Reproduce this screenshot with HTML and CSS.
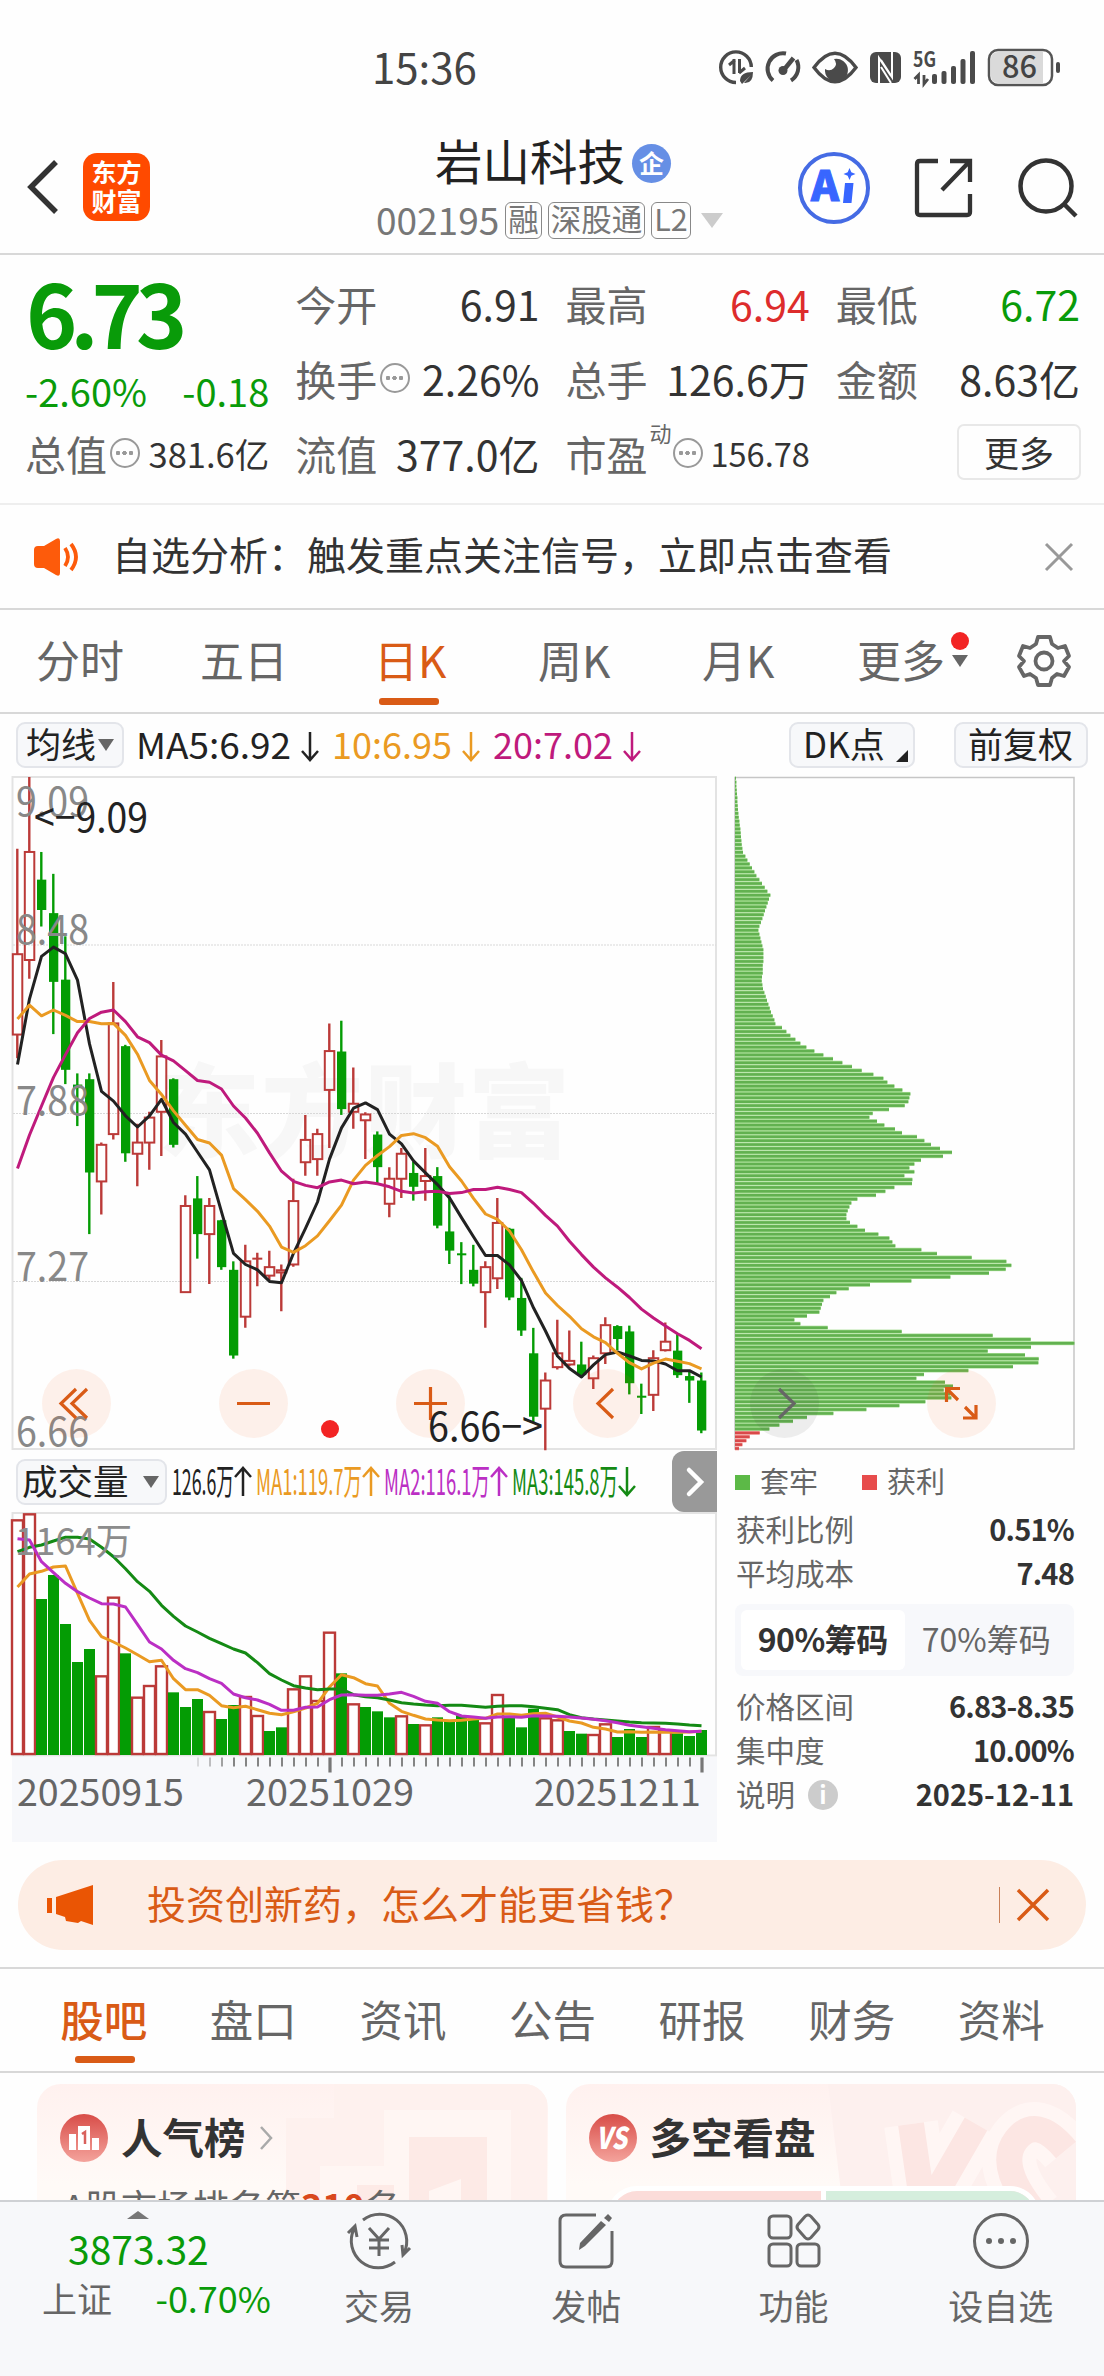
FILE: index.html
```html
<!DOCTYPE html>
<html lang="zh-CN">
<head>
    <meta charset="UTF-8">
    <meta name="viewport" content="width=device-width, initial-scale=1.0">
    <title>岩山科技 002195</title>
    <link rel="stylesheet" href="styles.css">
</head>
<body>

    <!-- 状态栏 -->
    <div class="status">
        <span class="clock">15:36</span>
        <svg class="status-icons" width="346" height="44" viewBox="716 46 346 44">
            <g fill="none" stroke="#4a4a4a" stroke-width="3.400">
                <path d="M736 82.500A15.300 15.300 0 1 1 751.300 67"/>
                <path d="M734 59v15M735 60l-6 5M739.500 59v14M739 73l6-5" stroke-width="3"/>
                <path d="M773 80.500A15.500 15.500 0 0 1 786 53.500M796.500 60A15.500 15.500 0 0 1 791 80.500" stroke-width="4"/>
                <path d="M783 71L793.500 58" stroke-width="4.500"/>
                <path d="M814 67.500Q835 39 856 67.500Q835 96 814 67.500Z"/>
            </g>
            <g fill="#4a4a4a">
                <path d="M740 81q0-9 13-9q0 12-9 11l7-8l-9 9z"/>
                <circle cx="783" cy="70.500" r="4.500"/>
                <path d="M834 59a11.500 11.500 0 1 1-9 10q5 3 9-1t0-9z"/>
                <rect x="870" y="52" width="31" height="31" rx="6"/>
                <text x="913" y="67" font-size="21" font-weight="700" textLength="23" lengthAdjust="spacingAndGlyphs">5G</text>
                <rect x="932" y="74" width="5" height="10" rx="2"/>
                <rect x="941.500" y="71" width="5" height="13" rx="2"/>
                <rect x="951" y="66" width="5" height="18" rx="2"/>
                <rect x="960.500" y="59" width="5" height="25" rx="2"/>
                <rect x="970" y="51" width="5" height="33" rx="2"/>
                <rect x="1056" y="62" width="4" height="11" rx="2"/>
            </g>
            <path d="M879 83V58L891 76M892 52V77L881 60M881 67L891 83" fill="none" stroke="#fff" stroke-width="2"/>
            <path d="M918.500 84V75l-4 4M924 75v9l4-5" fill="none" stroke="#4a4a4a" stroke-width="2.800"/>
            <rect x="989" y="50" width="63" height="35" rx="9" fill="#fff" stroke="#555" stroke-width="2.500"/>
            <path d="M1043 52H998q-7 0-7 7v17q0 7 7 7h45z" fill="#dadada"/>
            <text x="1002" y="78" font-size="31" font-weight="500" fill="#444" textLength="35" lengthAdjust="spacingAndGlyphs">86</text>
        </svg>
    </div>

    <!-- 标题栏 -->
    <header class="header">
        <svg class="back" width="34" height="58" viewBox="0 0 34 58"><path d="M30 4L5 29L30 54" fill="none" stroke="#333" stroke-width="5.500"/></svg>
        <div class="logo">东方<br>财富</div>
        <div class="title">
            <div class="name">岩山科技<span class="badge">企</span></div>
            <div class="code">002195<span class="tag">融</span><span class="tag">深股通</span><span class="tag">L2</span><i class="caret"></i></div>
        </div>
        <div class="actions">
            <svg width="72" height="72" viewBox="0 0 72 72">
                <circle cx="36" cy="36" r="34" fill="#fff" stroke="#456be4" stroke-width="4"/>
                <text x="13" y="49" font-size="41" font-weight="900" fill="#3866ff" stroke="#3866ff" textLength="28" lengthAdjust="spacingAndGlyphs">A</text>
                <path d="M47 31h8.500l-2 20h-8.500z M51.500 16l1.800 4.200l4.200 1.800l-4.200 1.800l-1.800 4.200l-1.800-4.200l-4.200-1.800l4.200-1.800z" fill="#3866ff"/>
            </svg>
            <svg width="60" height="60" viewBox="0 0 60 60"><path d="M24 3H6Q3 3 3 6V54Q3 57 6 57H53Q56 57 56 54V36M36 3H56V24M56 3L28 32" fill="none" stroke="#333" stroke-width="4.300"/></svg>
            <svg width="60" height="60" viewBox="0 0 60 60"><circle cx="28" cy="28" r="25.500" fill="none" stroke="#333" stroke-width="4.500"/><path d="M46 46L58 58" stroke="#333" stroke-width="4.500"/></svg>
        </div>
    </header>

    <!-- 行情 -->
    <section class="quote">
        <div class="price green">
            <div class="last">6.73</div>
            <div class="change"><span>-2.60%</span><span>-0.18</span></div>
        </div>
        <div class="cell"><label>今开</label><b>6.91</b></div>
        <div class="cell"><label>最高</label><b class="red">6.94</b></div>
        <div class="cell"><label>最低</label><b class="green">6.72</b></div>
        <div class="cell"><label>换手<i class="dots"></i></label><b>2.26%</b></div>
        <div class="cell"><label>总手</label><b>126.6万</b></div>
        <div class="cell"><label>金额</label><b>8.63亿</b></div>
        <div class="cell"><label>总值<i class="dots"></i></label><b class="small">381.6亿</b></div>
        <div class="cell"><label>流值</label><b>377.0亿</b></div>
        <div class="cell"><label>市盈<sup>动</sup><i class="dots"></i></label><b class="tiny">156.78</b></div>
        <div class="cell end"><button class="more">更多</button></div>
    </section>

    <!-- 提示 -->
    <section class="notice">
        <svg width="46" height="38" viewBox="0 0 46 38"><path d="M0 12q0-4 4-4h6L22 1q4-2 4 2v32q0 4-4 2L10 30H4q-4 0-4-4z" fill="#fd5b0b"/><path d="M31 10q6 9 0 18M37 6q10 13 0 26" fill="none" stroke="#fd5b0b" stroke-width="3.800"/></svg>
        <p>自选分析：触发重点关注信号，立即点击查看</p>
        <svg width="30" height="30" viewBox="0 0 30 30"><path d="M2 2L28 28M28 2L2 28" stroke="#999" stroke-width="3"/></svg>
    </section>

    <!-- 周期 -->
    <nav class="periods">
        <a>分时</a>
        <a>五日</a>
        <a class="on">日K</a>
        <a>周K</a>
        <a>月K</a>
        <a class="drop">更多<i class="dot"></i><i class="arrow"></i></a>
        <svg width="54" height="54" viewBox="-27 -27 54 54"><path d="M-6-24H6L8-17L14-13L21-15L25-5L20 0L25 6L20 15L13 13L8 17L6 24H-6L-8 17L-14 13L-20 15L-25 6L-20 0L-25-5L-21-15L-14-13L-8-17Z" fill="none" stroke="#666" stroke-width="3.800" stroke-linejoin="round"/><circle r="8.500" fill="none" stroke="#666" stroke-width="3.800"/></svg>
    </nav>

    <!-- 均线 -->
    <div class="ma-row">
        <span class="pill">均线<i class="arrow"></i></span>
        <svg width="520" height="46" viewBox="139 721 520 46">
            <g id="maLegend"></g>
        </svg>
        <span class="pill dk">DK点<i class="corner"></i></span>
        <span class="pill">前复权</span>
    </div>

    <!-- K线和筹码分布 -->
    <svg id="kline" class="kline" width="1104" height="681" viewBox="0 770 1104 681"></svg>

    <div class="lower">
        <div class="volume">
            <div class="vol-head">
                <span class="pill">成交量<i class="arrow"></i></span>
                <svg width="470" height="46" viewBox="170 1458 470 46">
                    <g id="volLegend"></g>
                </svg>
                <span class="next"><svg width="20" height="32" viewBox="0 0 20 32"><path d="M4 4L16 16L4 28" fill="none" stroke="#fff" stroke-width="4.500" stroke-linecap="round"/></svg></span>
            </div>
            <svg id="vol" width="705" height="330" viewBox="12 1512 705 330"></svg>
        </div>
        <div class="chips">
            <div class="legend"><i class="sq g"></i>套牢<i class="sq r"></i>获利</div>
            <div class="line"><span>获利比例</span><b>0.51%</b></div>
            <div class="line"><span>平均成本</span><b>7.48</b></div>
            <div class="toggle"><span class="on">90%筹码</span><span>70%筹码</span></div>
            <div class="line"><span>价格区间</span><b>6.83-8.35</b></div>
            <div class="line"><span>集中度</span><b>10.00%</b></div>
            <div class="line"><span>说明<i class="info">i</i></span><b class="date">2025-12-11</b></div>
        </div>
    </div>

    <!-- 广告条 -->
    <div class="banner">
        <svg width="46" height="40" viewBox="0 0 46 40"><path d="M0 13h5v15H0zM9 12L46 0v40L34 36l-3 2l-12-2l-1-4L9 29z" fill="#ea5504"/></svg>
        <p>投资创新药，怎么才能更省钱？</p>
        <i class="bar"></i>
        <svg width="32" height="32" viewBox="0 0 32 32"><path d="M1 1L31 31M31 1L1 31" stroke="#d95b16" stroke-width="3.500"/></svg>
    </div>

    <nav class="tabs">
        <a class="on">股吧</a><a>盘口</a><a>资讯</a><a>公告</a><a>研报</a><a>财务</a><a>资料</a>
    </nav>

    <section class="cards">
        <div class="card">
            <svg class="card-bg" width="510" height="116" viewBox="0 0 510 116">
                <path d="M297 0H510V116H249V34H297z" fill="#fef1ee"/>
                <path d="M347 26H474V116H283V82H347z" fill="#fff6f3"/>
                <path d="M372 53H450V116H372zM320 101h37v15h-37z" fill="#fdeae6"/>
                <path d="M392 107l32-12v21h-32z" fill="#fff6f3"/>
            </svg>
            <h3>
                <svg width="48" height="48" viewBox="0 0 48 48">
                    <defs><linearGradient id="rg" x1="0" y1="0" x2="0" y2="1"><stop offset="0" stop-color="#d84d48"/><stop offset="1" stop-color="#f4a39c"/></linearGradient></defs>
                    <circle cx="24" cy="24" r="24" fill="url(#rg)"/>
                    <path d="M9 20h7v16H9zM18 12h12v24H18zM32 24h7v12h-7z" fill="#fff"/>
                    <path d="M22 20l3-2V30" fill="none" stroke="#d9615c" stroke-width="2.500"/>
                </svg>
                <span>人气榜</span>
                <svg width="14" height="24" viewBox="0 0 14 24"><path d="M2 1L12 12L2 23" fill="none" stroke="#aaa" stroke-width="2.500"/></svg>
            </h3>
            <p>A股市场排名第<em>310</em>名</p>
        </div>
        <div class="card">
            <svg class="card-bg" width="511" height="116" viewBox="0 0 511 116">
                <path d="M262 0H511V116H276z" fill="#fdf0ee"/>
                <g fill="none" stroke-linejoin="miter">
                    <path d="M345 40L358 130L410 40M500 66Q470 30 450 56T470 130" stroke="#fff6f4" stroke-width="54"/>
                    <path d="M345 40L358 130L410 40M500 66Q470 30 450 56T470 130" stroke="#fce6e3" stroke-width="26"/>
                </g>
            </svg>
            <h3>
                <svg width="48" height="48" viewBox="0 0 48 48">
                    <circle cx="24" cy="24" r="24" fill="url(#rg)"/>
                    <text x="7" y="35" font-size="30" font-weight="900" font-style="italic" fill="#fff" textLength="31" lengthAdjust="spacingAndGlyphs">VS</text>
                </svg>
                <span>多空看盘</span>
            </h3>
            <div class="meter"><i></i><i></i></div>
        </div>
    </section>

    <!-- 底部栏 -->
    <footer class="footer">
        <div class="index">
            <i class="up"></i>
            <div class="green point">3873.32</div>
            <div class="row"><span>上证</span><span class="green rate">-0.70%</span></div>
        </div>
        <div class="item">
            <svg width="66" height="58" viewBox="0 0 66 58" fill="none" stroke="#666" stroke-width="3">
                <path d="M17 8A27 27 0 0 1 58 41M64 36L57 43L56 33M49 50A27 27 0 0 1 8 17M2 21L9 14L11 25"/>
                <path d="M23 16L33 27L43 16M33 27V44M23 28H43M23 36H43"/>
            </svg>
            交易
        </div>
        <div class="item">
            <svg width="56" height="58" viewBox="0 0 56 58" fill="none" stroke="#666" stroke-width="3">
                <path d="M38 3H8Q2 3 2 9V49Q2 55 8 55H48Q54 55 54 49V19"/>
                <path d="M21 38L22 31L43 9L48 13L27 34z M46 6L50 2L54 6L51 10z" fill="#666" stroke="none"/>
            </svg>
            发帖
        </div>
        <div class="item">
            <svg width="54" height="58" viewBox="0 0 54 58" fill="none" stroke="#666" stroke-width="3">
                <rect x="2" y="4" width="22" height="22" rx="4"/><rect x="2" y="32" width="22" height="22" rx="4"/><rect x="30" y="32" width="22" height="22" rx="4"/>
                <path d="M38 4.500Q41 1.500 44 4.500L51 12.500Q53 15 51 17.500L44 25.500Q41 28.500 38 25.500L31 17.500Q29 15 31 12.500z"/>
            </svg>
            功能
        </div>
        <div class="item">
            <svg width="58" height="58" viewBox="0 0 58 58"><circle cx="29" cy="29" r="26.500" fill="none" stroke="#666" stroke-width="3"/><g fill="#666"><circle cx="17" cy="29" r="3"/><circle cx="29" cy="29" r="3"/><circle cx="41" cy="29" r="3"/></g></svg>
            设自选
        </div>
    </footer>

    <script src="chart.js"></script>
</body>
</html>
```

FILE: styles.css
```css
* {
    box-sizing: border-box;
}
body {
    margin: 0;
    width: 1104px;
    height: 2376px;
    overflow: hidden;
    background: #fefefe;
    color: #333;
    font-family: "Noto Sans CJK SC", "Noto Sans", sans-serif;
}
svg {
    display: block;
    flex: none;
    overflow: visible;
}
p, h3 {
    margin: 0;
}
i {
    font-style: normal;
}
.green {
    color: #099b09 !important;
}
.red {
    color: #dd2c2c !important;
}

/* 状态栏 */
.status {
    display: flex;
    height: 90px;
    padding: 46px 42px 0 372px;
    justify-content: space-between;
}
.clock {
    font-size: 42px;
    line-height: 40px;
    color: #444;
}

/* 标题栏 */
.header {
    display: flex;
    height: 165px;
    padding-left: 26px;
    border-bottom: 2px solid #d8d8d8;
}
.back {
    margin: 68px 23px 0 0;
}
.logo {
    width: 67px;
    height: 68px;
    margin-top: 63px;
    padding-top: 4px;
    border-radius: 14px;
    background: #ff4a00;
    color: #fff;
    font-size: 25px;
    line-height: 29px;
    font-weight: 700;
    text-align: center;
}
.title {
    width: 647px;
    padding: 40px 0 0 226px;
}
.name {
    display: flex;
    align-items: center;
    height: 60px;
    padding-left: 59px;
    font-size: 47.500px;
    line-height: 60px;
    color: #222;
}
.badge {
    width: 39px;
    height: 39px;
    margin: 7px 0 0 7px;
    border-radius: 50%;
    background: #668fe5;
    color: #fff;
    font-size: 25px;
    line-height: 36px;
    font-weight: 700;
    text-align: center;
}
.code {
    display: flex;
    align-items: center;
    height: 40px;
    margin-top: 9px;
    font-size: 37px;
    line-height: 36px;
    color: #777;
}
.tag {
    height: 37px;
    margin: 3px 0 0 6px;
    padding: 0 2px;
    border: 1.500px solid #888;
    border-radius: 6px;
    font-size: 30.500px;
    line-height: 31px;
}
.caret {
    margin: 3px 0 0 10px;
    border: 11px solid transparent;
    border-top: 15px solid #ccc;
    border-bottom: 0;
}
.actions {
    display: flex;
    align-items: center;
    height: 72px;
    gap: 44px;
    margin-top: 62px;
    margin-left: 1px;
}

/* 行情 */
.quote {
    display: grid;
    grid-template-columns: repeat(4, 1fr);
    grid-template-rows: repeat(3, 75px);
    column-gap: 26px;
    height: 250px;
    padding: 10px 24px 0 25px;
    border-bottom: 2px solid #eee;
}
.price {
    grid-row: span 2;
}
.last {
    height: 98px;
    padding-left: 1px;
    font-size: 87px;
    line-height: 93px;
    font-weight: 700;
    letter-spacing: -7px;
}
.change {
    display: flex;
    justify-content: space-between;
    font-size: 38px;
    line-height: 56px;
}
.cell {
    display: flex;
    align-items: center;
    justify-content: space-between;
    white-space: nowrap;
}
.cell.end {
    justify-content: flex-end;
}
.cell label {
    display: flex;
    align-items: center;
    font-size: 41px;
    line-height: 60px;
    color: #666;
}
.cell b {
    font-size: 41px;
    font-weight: 400;
    line-height: 60px;
}
.cell b.small {
    font-size: 34.500px;
}
.cell b.tiny {
    font-size: 32.500px;
}
.cell sup {
    align-self: flex-start;
    height: 22px;
    margin: -2px 0 0 2px;
    font-size: 22px;
    line-height: 22px;
}
.dots {
    width: 30px;
    height: 30px;
    margin-left: 3px;
    border: 2.500px solid #999;
    border-radius: 50%;
    background:
        radial-gradient(circle at 6px 50%, #999 2px, transparent 2.500px),
        radial-gradient(circle at 12.500px 50%, #999 2px, transparent 2.500px),
        radial-gradient(circle at 19px 50%, #999 2px, transparent 2.500px);
}
.cell sup + .dots {
    margin-left: 1px;
}
.more {
    width: 124px;
    height: 56px;
    margin: -2px -1px 0 0;
    padding: 0 0 4px;
    border: 2px solid #e8e8e8;
    border-radius: 7px;
    background: none;
    color: #333;
    font: 35px "Noto Sans CJK SC", sans-serif;
}

/* 提示 */
.notice {
    display: flex;
    align-items: center;
    height: 105px;
    padding: 0 30px 0 34px;
    border-bottom: 2px solid #d8d8d8;
}
.notice p {
    flex: 1;
    margin: -7px 0 0 32px;
    font-size: 39px;
}

/* 周期 */
.periods {
    position: relative;
    display: flex;
    align-items: center;
    height: 104px;
    padding: 0 33px 0 36px;
    border-bottom: 2px solid #d8d8d8;
    color: #666;
    font-size: 44px;
}
.periods a {
    width: 164px;
    line-height: 100px;
    margin-top: -4px;
}
.periods a:nth-child(2) {
    width: 174px;
}
.periods .on,
.periods .drop {
    position: relative;
}
.periods a:nth-child(5) {
    width: 155px;
}
.periods .on,
.tabs .on {
    color: #d95b16;
}
.periods .on::after {
    content: "";
    position: absolute;
    left: 5px;
    bottom: 4px;
    width: 60px;
    height: 7px;
    border-radius: 3px;
    background: #d95b16;
}
.periods .drop {
    margin-right: auto;
    width: 120px;
}
.dot {
    position: absolute;
    left: 94px;
    top: 23px;
    width: 18px;
    height: 18px;
    border-radius: 50%;
    background: #f22424;
}
.arrow {
    display: inline-block;
    border: 8px solid transparent;
    border-top: 12px solid #666;
    border-bottom: 0;
}
.drop .arrow {
    position: absolute;
    left: 95px;
    top: 46px;
}

/* 均线 */
.ma-row {
    display: flex;
    align-items: center;
    height: 56px;
    padding: 5px 16px 0;
}
.pill {
    display: flex;
    align-items: center;
    height: 46px;
    padding: 0 0 3px 10px;
    border: 2px solid #e3e5ea;
    border-radius: 9px;
    background: #f7f8fa;
    font-size: 35px;
    line-height: 40px;
    color: #222;
    white-space: nowrap;
}
.pill .arrow {
    margin-top: 4px;
}
.ma-row .pill:first-child {
    width: 109px;
    margin-right: 14px;
    padding-left: 8px;
}
.ma-row .arrow {
    margin-left: 2px;
}
.ma-row .dk {
    position: relative;
    width: 127px;
    margin: 0 39px 0 131px;
    padding-left: 12px;
}
.ma-row .pill:last-child {
    width: 134px;
    flex: none;
    padding-left: 12px;
}
.corner {
    position: absolute;
    right: 5px;
    bottom: 4px;
    border-left: 12px solid transparent;
    border-bottom: 12px solid #222;
}

/* 成交量 */
.lower {
    display: flex;
    height: 409px;
}
.volume {
    width: 705px;
    margin-left: 12px;
}
.vol-head {
    display: flex;
    align-items: center;
    height: 61px;
}
.vol-head .pill {
    width: 151px;
    margin: 0 3px 0 4px;
    padding-left: 4px;
    font-size: 35.500px;
}
.vol-head .arrow {
    margin-left: 14px;
}
.next {
    display: flex;
    align-items: center;
    justify-content: center;
    width: 45px;
    height: 61px;
    margin-left: auto;
    border-radius: 12px 0 0 12px;
    background: #999;
}

/* 筹码 */
.chips {
    width: 339px;
    margin-left: 18px;
    padding-top: 9px;
    color: #666;
    font-size: 29.500px;
}
.legend,
.line {
    display: flex;
    align-items: center;
    height: 44px;
    line-height: 44px;
}
.line {
    padding-left: 1px;
}
.legend {
    height: 40px;
    margin-bottom: 6px;
    line-height: 40px;
    font-size: 29px;
}
.sq {
    width: 15px;
    height: 15px;
    margin: 4px 10px 0 0;
}
.sq.g {
    background: #5cb947;
}
.sq.r {
    margin-left: 44px;
    background: #e74c4c;
}
.line {
    justify-content: space-between;
}
.line span {
    display: flex;
    align-items: center;
}
.line b {
    font-size: 29px;
    font-weight: 700;
    letter-spacing: -0.800px;
    color: #333;
}
.line .date {
    letter-spacing: 0;
}
.info {
    width: 30px;
    height: 30px;
    margin: 3px 0 0 13px;
    border-radius: 50%;
    background: #ccc;
    color: #fff;
    font-size: 24px;
    font-weight: 700;
    line-height: 28px;
    text-align: center;
}
.toggle {
    display: flex;
    height: 72px;
    margin: 10px 0 7px;
    padding: 6px;
    border-radius: 8px;
    background: #f7f8fb;
    font-size: 32px;
    line-height: 56px;
    text-align: center;
}
.toggle span {
    flex: 1;
}
.toggle .on {
    border-radius: 6px;
    background: #fff;
    color: #333;
    font-weight: 700;
    letter-spacing: -0.500px;
}

/* 广告条 */
.banner {
    display: flex;
    align-items: center;
    height: 90px;
    margin: 0 18px 17px;
    padding: 0 37px 0 29px;
    border-radius: 45px;
    background: #fdede4;
    color: #d95b16;
}
.banner p {
    flex: 1;
    margin: -7px 0 0 54px;
    font-size: 39px;
}
.bar {
    width: 1.500px;
    height: 36px;
    margin-right: 17px;
    background: #c98058;
}

/* 标签页 */
.tabs {
    display: flex;
    height: 106px;
    padding: 0 28px 0 29px;
    border-top: 2px solid #d8d8d8;
    border-bottom: 2px solid #d8d8d8;
    color: #666;
    font-size: 43.500px;
    line-height: 100px;
}
.tabs a {
    position: relative;
    flex: 1;
    text-align: center;
}
.tabs .on {
    font-weight: 500;
}
.tabs .on::after {
    content: "";
    position: absolute;
    left: 46px;
    bottom: 8px;
    width: 60px;
    height: 7px;
    border-radius: 3px;
    background: #d95b16;
}

/* 卡片 */
.cards {
    display: flex;
    gap: 18px;
    height: 127px;
    padding: 11px 28px 0 37px;
    overflow: hidden;
}
.card {
    position: relative;
    flex: 1;
    height: 200px;
    padding: 30px 23px 0;
    border-radius: 24px;
    background: linear-gradient(#fff1ef, #fffaf7 100px);
    overflow: hidden;
}
.card-bg {
    position: absolute;
    left: 0;
    top: 0;
}
.card h3 {
    position: relative;
    display: flex;
    align-items: center;
    gap: 13px;
    height: 48px;
    font-size: 41.500px;
    line-height: 44px;
}
.card h3 span {
    margin-top: -5px;
}
.card p {
    position: relative;
    margin-top: 17px;
    padding-left: 3px;
    font-size: 36px;
    color: #666;
}
.card em {
    color: #d9481c;
    font-style: normal;
    font-weight: 700;
}
.meter {
    position: relative;
    display: flex;
    height: 60px;
    margin: 24px 13px 0 18px;
    border: 5px solid #fff;
    border-radius: 30px;
    overflow: hidden;
}
.meter i {
    flex: 1;
    background: #fbdcd9;
}
.meter i + i {
    border-left: 5px solid #fff;
    background: #d5eedd;
}

/* 底部栏 */
.footer {
    display: flex;
    height: 177px;
    border-top: 2px solid #cfd1d4;
    background: #f7f8fa;
    color: #666;
    font-size: 35px;
}
.index {
    width: 275px;
    padding: 9px 4px 0 42px;
}
.up {
    display: block;
    width: 22px;
    margin-left: 85px;
    border: 11px solid transparent;
    border-bottom: 8px solid #777;
    border-top: 0;
}
.point {
    padding-left: 26px;
    margin-top: -1px;
    font-size: 39px;
    line-height: 60px;
}
.index .row {
    display: flex;
    justify-content: space-between;
    line-height: 39px;
}
.rate {
    font-size: 36px;
}
.item {
    display: flex;
    flex: 1;
    flex-direction: column;
    align-items: center;
    padding: 10px 0 0 1px;
    line-height: 68px;
}
.item svg {
    margin-bottom: 1px;
}
```

FILE: chart.js
```javascript
const RED = '#bb3a38', GREEN = '#049c04';
const cx = i => 17 + 12 * i;

// 最高, 实体上沿, 实体下沿, 最低, 颜色
const candles = [
    [199,435,615,668,1],[38,206,448,490,1],[206,268,336,373,0],[255,343,497,614,0],[395,492,694,726,0],
    [702,727,735,820,0],[702,715,924,1062,0],[857,862,944,1018,1],[497,590,838,850,1],[638,641,881,900,0],
    [815,857,882,955,1],[788,801,857,918,1],[627,664,788,887,1],[713,715,862,868,0],[975,999,1192,1192,1],
    [932,982,1062,1117,0],[981,999,1062,1174,1],[1030,1031,1136,1142,0],[1123,1142,1334,1341,0],[1086,1123,1247,1272,1],
    [1104,1117,1117,1179,1],[1099,1136,1155,1165,1],[1130,1143,1148,1235,1],[938,988,1130,1135,1],[795,851,901,931,1],
    [826,838,894,931,1],[590,652,739,869,1],[584,653,782,795,0],[689,770,788,826,1],[789,794,807,894,1],
    [832,839,912,948,0],[912,938,994,1024,1],[869,882,938,981,1],[900,925,956,987,0],[869,932,943,987,1],
    [912,932,1043,1049,0],[975,1056,1099,1129,0],[1080,1105,1105,1174,0],[1086,1142,1173,1179,0],[1123,1136,1192,1272,1],
    [981,1037,1161,1185,1],[1048,1050,1204,1210,0],[1160,1205,1278,1290,0],[1272,1329,1471,1484,0],[1372,1390,1453,1546,1],
    [1254,1329,1360,1365,1],[1278,1346,1354,1358,1],[1303,1354,1378,1384,0],[1334,1340,1385,1409,1],[1248,1266,1329,1353,1],
    [1266,1268,1297,1322,0],[1267,1280,1396,1421,0],[1397,1424,1424,1465,0],[1322,1340,1422,1458,1],[1260,1303,1322,1325,1],
    [1285,1323,1378,1384,0],[1370,1380,1390,1440,0],[1372,1390,1502,1508,0]
];
const ma5 = [682,535,440,419,434,493,636,742,764,797,822,797,760,812,838,878,918,1012,1105,1130,1142,1168,1171,1105,1049,990,894,824,780,768,783,838,860,898,925,951,981,1025,1068,1110,1110,1131,1166,1227,1279,1335,1363,1382,1355,1332,1326,1335,1345,1346,1353,1368,1368,1382];
const ma10 = [580,549,573,560,572,586,586,591,590,617,659,718,749,786,818,850,858,885,960,985,1011,1044,1091,1103,1088,1066,1032,997,941,908,886,866,841,837,846,865,911,943,982,1017,1029,1055,1097,1147,1194,1222,1246,1274,1292,1305,1329,1350,1364,1351,1342,1347,1352,1364];
const ma20 = [915,840,775,711,660,611,579,565,560,586,620,633,661,674,696,718,722,737,775,802,836,880,921,944,953,958,945,941,949,945,949,956,966,970,967,966,971,969,962,962,957,962,969,993,1020,1044,1078,1108,1136,1160,1181,1204,1230,1250,1268,1285,1300,1319];

// 筹码分布
const chips = [3,4,4,5,6,7,7,8,9,10,11,13,14,16,17,18,19,20,22,24,31,37,44,51,58,64,73,81,89,97,106,102,98,94,90,86,82,78,73,70,73,76,79,82,85,85,85,85,83,83,83,81,80,82,84,88,92,96,100,104,108,113,118,121,141,154,166,181,196,214,238,265,294,322,351,380,415,445,457,478,502,526,523,520,509,462,413,403,426,448,480,501,546,568,588,615,651,624,558,538,523,538,508,532,531,478,451,423,367,349,343,338,334,334,345,367,390,430,463,472,481,559,606,710,814,829,812,762,646,529,405,341,304,285,265,261,257,253,216,178,196,278,500,773,887,1018,888,758,870,911,910,834,700,567,544,630,654,626,646,649,571,493,394,295,216,174,133,103,74,44,34,22,12];

const volumes = [238,220,477,405,552,666,627,706,470,640,770,735,676,757,801,777,813,837,795,768,825,873,862,745,706,780,575,700,790,801,814,832,826,852,853,832,840,826,840,847,762,832,862,806,832,838,873,881,882,850,891,867,891,858,870,880,888,870];
const volUp = [0,1,7,8,10,11,12,16,19,20,23,24,25,26,28,32,34,39,40,44,45,48,49,53,54];
const vma1 = [441,402,394,381,378,460,541,590,606,624,644,665,661,716,749,749,766,797,803,799,809,820,824,815,804,790,741,704,713,731,738,790,814,826,837,840,842,841,837,835,822,822,826,821,820,831,843,849,862,867,876,875,877,876,877,877,876,874];
const vma2 = [296,300,365,398,430,455,474,491,492,501,553,606,627,661,686,698,716,730,762,773,780,793,811,811,802,801,779,765,764,766,766,762,757,769,784,790,815,828,831,835,831,830,832,827,828,829,831,834,838,842,848,856,860,865,869,872,875,874];
const vma3 = [335,322,315,303,292,292,297,322,350,386,425,454,496,529,558,576,595,611,627,639,668,701,720,737,744,749,747,747,764,770,773,780,788,792,795,797,796,796,799,802,799,797,797,800,805,809,824,833,837,840,843,846,848,849,850,852,855,857];

const py = v => 760 + v / 2.24;
const vy = v => 1440 + v / 3;

function line(data, fy, color) {
    return `<polyline points="${data.map((v, i) => (cx(i) + 0.5) + ',' + fy(v).toFixed(1)).join(' ')}" fill="none" stroke="${color}" stroke-width="3" stroke-linejoin="round"/>`;
}
function label(x, y, w, s, color, size) {
    return `<text x="${x}" y="${y}" font-size="${size || 40}" fill="${color}" textLength="${w}" lengthAdjust="spacingAndGlyphs">${s}</text>`;
}
function arrow(x, top, bottom, color, up) {
    const tip = up ? top : bottom, d = up ? 9 : -9;
    return `<path d="M${x} ${top}V${bottom}M${x - 8} ${tip + d}L${x} ${tip}L${x + 8} ${tip + d}" fill="none" stroke="${color}" stroke-width="2.5"/>`;
}
function circle(x, color, icon, stroke) {
    return `<circle cx="${x}" cy="1403.500" r="34.500" fill="${color}" fill-opacity=".09"/><path d="${icon}" fill="none" stroke="${stroke}" stroke-width="3.2"/>`;
}

// K线图
let k = '';
k += '<text x="158" y="1150" font-size="102" font-weight="900" fill="#f7f7f7" textLength="412">东方财富</text>';
k += '<rect x="12.500" y="777" width="703.500" height="672" fill="none" stroke="#e3e3e3" stroke-width="2"/>';
[945, 1113.5, 1281.5].forEach(y => {
    k += `<path d="M13 ${y}H716" stroke="#d8d8d8" stroke-width="1" stroke-dasharray="2 1"/>`;
});
candles.forEach(([h, t, b, l, up], i) => {
    const x = cx(i) + 0.3, c = up ? RED : GREEN;
    const top = py(t), bot = py(b);
    if (up) {
        k += `<path d="M${x} ${py(h)}V${top}M${x} ${bot}V${py(l)}" stroke="${c}" stroke-width="2.400"/>`;
        k += `<rect x="${x - 4.5}" y="${top}" width="9.500" height="${bot - top}" fill="none" stroke="${c}" stroke-width="2"/>`;
        if (bot === top) {
            k += `<path d="M${x - 5} ${top}H${x + 5}" stroke="${c}" stroke-width="2"/>`;
        }
    } else {
        k += `<path d="M${x} ${py(h)}V${py(l)}" stroke="${c}" stroke-width="2.400"/>`;
        k += `<rect x="${x - 4.3}" y="${top}" width="9.300" height="${Math.max(bot - top, 2)}" fill="${c}"/>`;
    }
});
k += line(ma5, py, '#222') + line(ma10, py, '#ea9a22') + line(ma20, py, '#bf1a7c');
k += label(16, 816, 73, '9.09', '#888') + label(16, 944, 73, '8.48', '#888') + label(16, 1115, 73, '7.88', '#888');
k += label(16, 1281, 73, '7.27', '#888') + label(16, 1446, 73, '6.66', '#888');

k += '<path d="M735 777.500H1074V1449H735Z" fill="none" stroke="#c6c6c6" stroke-width="1.500"/>';
chips.forEach((w, i) => {
    const y = py(41 + i * 8.728), red = i > 167;
    k += `<rect x="735" y="${y - 2}" width="${w / 3}" height="3.900" fill="${red ? '#f5a8a4' : '#a8df95'}"/>`;
    k += `<rect x="735" y="${y - 1.3}" width="${w / 3}" height="2.600" fill="${red ? '#d9494a' : '#62b150'}"/>`;
});

k += circle(76.5, '#f26522', 'M76 1389L61 1403.500L76 1418M87 1389L72 1403.500L87 1418', '#d95b16');
k += circle(253.5, '#f26522', 'M237 1403.500H270', '#d95b16');
k += circle(430.5, '#f26522', 'M414 1403.500H447M430.500 1387V1420', '#d95b16');
k += circle(607.5, '#f26522', 'M613 1389L598 1403.500L613 1418', '#d95b16');
k += circle(784.5, '#444', 'M779 1389L794 1403.500L779 1418', '#666');
k += circle(961.5, '#f26522', 'M946.500 1402V1388.500H960M948 1390L958 1400M976 1405V1418H963M965 1407L975 1417', '#d95b16');
k += '<circle cx="330" cy="1429" r="9" fill="#f22424"/>';
k += label(34, 832, 114, '&lt;−9.09', '#222') + label(428, 1441, 115, '6.66−&gt;', '#222');
document.getElementById('kline').innerHTML = k;

// 均线数值
document.getElementById('maLegend').innerHTML =
    label(137, 758, 155, 'MA5:6.92', '#222', 36) + arrow(311, 731, 759, '#222') +
    label(333, 758, 120, '10:6.95', '#ea9a22', 36) + arrow(472, 731, 759, '#ea9a22') +
    label(494, 758, 120, '20:7.02', '#bf1a7c', 36) + arrow(633, 731, 759, '#bf1a7c');

document.getElementById('volLegend').innerHTML =
    label(172, 1494, 62, '126.6万', '#222', 36) + arrow(243, 1467, 1495, '#222', true) +
    label(256, 1494, 106, 'MA1:119.7万', '#ea9a22', 36) + arrow(371, 1467, 1495, '#ea9a22', true) +
    label(384, 1494, 106, 'MA2:116.1万', '#bb2fc4', 36) + arrow(499, 1467, 1495, '#bb2fc4', true) +
    label(512, 1494, 106, 'MA3:145.8万', '#148a14', 36) + arrow(627, 1466, 1494, '#148a14');

// 成交量图
let s = '<rect x="12" y="1757" width="705" height="85" fill="#f7f8fb"/>';
s += '<rect x="12.500" y="1513" width="703.500" height="242.500" fill="none" stroke="#e3e3e3" stroke-width="2"/>';
volumes.forEach((v, i) => {
    const x = cx(i), y = vy(v), h = 1755 - y;
    if (volUp.includes(i)) {
        s += `<rect x="${x - 5}" y="${y + 1}" width="11" height="${h - 2}" fill="#fff" stroke="${RED}" stroke-width="2.400"/>`;
    } else {
        s += `<rect x="${x - 5}" y="${y}" width="11" height="${h}" fill="${GREEN}"/>`;
    }
});
s += line(vma1, vy, '#ea9a22') + line(vma3, vy, '#148a14') + line(vma2, vy, '#bb2fc4');
s += label(15, 1555, 117, '1164万', '#8c8c8c', 37);
for (let i = 15; i < 58; i++) {
    const big = i === 26 || i === 57;
    s += `<path d="M${cx(i) + 1} 1757.500v${big ? 15 : 9}" stroke="#777" stroke-width="${big ? 3.2 : 1.8}" opacity="${Math.min(1, (i - 14) / 4)}"/>`;
}
s += label(17, 1806, 167, '20250915', '#666', 37) + label(246, 1806, 168, '20251029', '#666', 37) + label(534, 1806, 167, '20251211', '#666', 37);
document.getElementById('vol').innerHTML = s;
```
